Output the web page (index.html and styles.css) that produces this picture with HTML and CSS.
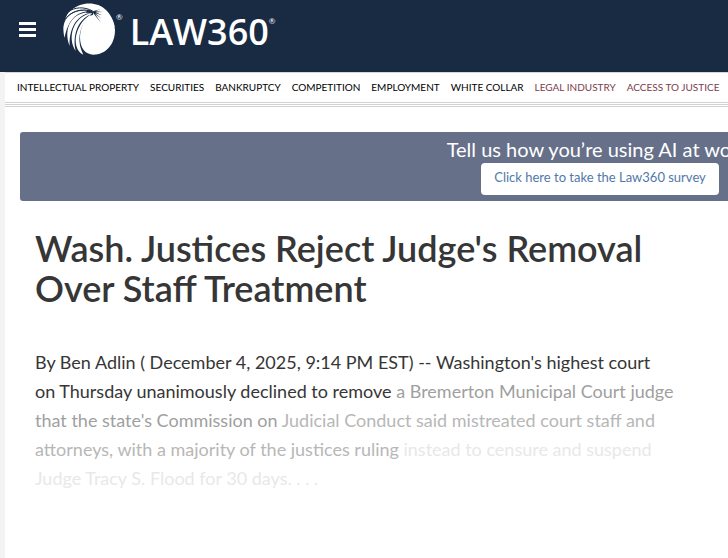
FILE: index.html
```html
<!DOCTYPE html>
<html lang="en">
<head>
<meta charset="utf-8">
<meta name="viewport" content="width=device-width, initial-scale=1">
<title>Wash. Justices Reject Judge's Removal Over Staff Treatment - Law360</title>
<link rel="stylesheet" href="styles.css">
</head>
<body>
<header class="masthead">
  <button class="menu" type="button" aria-label="Menu">
    <svg class="menu-icon" viewBox="0 0 17 15" aria-hidden="true"><path d="M0 0h17v3H0zM0 6h17v3H0zM0 12h17v3H0z"/></svg>
  </button>
  <a class="brand" href="#">
    <svg class="emblem" viewBox="186 6 162 162" aria-hidden="true">
      <path class="emblem-ball" d="M280 33C300 22 345 50 345 90C345 134 317 164 280 164C256 164 240 144 240 112C240 82 256 52 280 38Z"/>
      <path class="emblem-ball" d="M214 31C240 6 290 2 318 30C330 42 341 60 344 80L300 60L278 36C262 28 236 24 214 31Z"/>
      <path class="emblem-ball" d="M274 33C238 25 210 34 194 62C200 42 210 30 224 24C240 20 262 22 274 33Z"/>
      <path class="emblem-ball" d="M276 36C240 28 204 54 194 114C180 66 204 24 276 33Z"/>
      <path class="emblem-ball" d="M276 39C242 38 206 74 209 138C188 84 216 34 276 36Z"/>
      <path class="emblem-ball" d="M276 42C246 50 214 92 227 153C200 112 220 48 276 39Z"/>
      <path class="emblem-ball" d="M277 43C250 62 222 108 250 164C208 142 228 64 277 41Z"/>
      <path class="emblem-ray" d="M278 33C252 19 224 21 204 36M278 34C245 24 212 32 192 62"/>
      <path class="emblem-knot" d="M262 30L280 35L279 44L270 48L276 39L258 38ZM279 34L302 27L286 34L308 36L287 37L307 46L286 40L305 56L285 42L303 68L281 41Z"/>
    </svg>
    <span class="reg">®</span>
    <span class="wordmark">LAW360</span>
    <span class="reg">®</span>
  </a>
</header>
<div class="page">
  <nav class="sections" aria-label="Sections">
    <a href="#">INTELLECTUAL PROPERTY</a>
    <a href="#">SECURITIES</a>
    <a href="#">BANKRUPTCY</a>
    <a href="#">COMPETITION</a>
    <a href="#">EMPLOYMENT</a>
    <a href="#">WHITE COLLAR</a>
    <a class="accent" href="#">LEGAL INDUSTRY</a>
    <a class="accent" href="#">ACCESS TO JUSTICE</a>
  </nav>
  <main>
    <section class="survey">
      <p class="survey-text">Tell us how you’re using AI at work.</p>
      <a class="survey-link" href="#">Click here to take the Law360 survey</a>
    </section>
    <article class="story">
      <h1>Wash. Justices Reject Judge's Removal Over Staff Treatment</h1>
      <p>By Ben Adlin ( December 4, 2025, 9:14 PM EST) -- Washington's highest court on Thursday unanimously declined to remove <span class="fade-1">a Bremerton Municipal Court judge that the state's Commission on</span> <span class="fade-2">Judicial Conduct said mistreated court staff and attorneys, with a majority of the justices ruling</span> <span class="fade-3">instead to censure and suspend Judge Tracy S. Flood for 30 days. . . .</span></p>
    </article>
  </main>
</div>
</body>
</html>
```
FILE: styles.css
```css
* {
  box-sizing: border-box;
}

body {
  margin: 0;
  min-height: 100vh;
  display: flex;
  flex-direction: column;
  overflow-x: hidden;
  background: #f3f3f3;
  color: #363636;
  font-family: Lato, "Liberation Sans", sans-serif;
}

a {
  color: inherit;
  text-decoration: none;
}

.masthead {
  display: flex;
  align-items: flex-start;
  height: 72px;
  padding-left: 19px;
  background: #182b43;
  color: #fff;
}

.menu {
  display: flex;
  margin: 22px 0 0;
  padding: 0;
  border: 0;
  background: none;
}

.menu-icon {
  width: 17px;
  height: 15px;
  fill: #fff;
}

.brand {
  display: flex;
  align-items: flex-start;
  margin: 2px 0 0 26px;
}

.emblem {
  width: 54px;
  height: 54px;
}

.emblem-ball {
  fill: #fff;
}

.emblem-knot {
  fill: #182b43;
}

.emblem-ray {
  fill: none;
  stroke: #182b43;
  stroke-width: 3;
}

.reg {
  margin-top: 10px;
  font-size: 8px;
  line-height: 10px;
}

.wordmark {
  margin-left: 7px;
  padding-top: 8px;
  font-family: "Open Sans", Lato, sans-serif;
  font-size: 36px;
  font-weight: 600;
  line-height: 44px;
}

.wordmark + .reg {
  margin-top: 14px;
}

.page {
  flex: 1;
  margin-left: 5px;
  background: #fff;
}

.sections {
  display: flex;
  gap: 11px;
  height: 35px;
  padding-left: 12px;
  border-top: 1px solid #d5d9d9;
  border-bottom: 1px solid #d0d3d0;
  box-shadow: inset 0 -1px #fff, inset 0 -2px #d0d3d0, inset 0 -3px #fff, inset 0 -4px #d0d3d0;
  color: #000;
  font-size: 10px;
  line-height: 29px;
  white-space: nowrap;
}

.accent {
  color: #7d3c4e;
}

.survey {
  display: flex;
  flex-direction: column;
  align-items: center;
  width: 1160px;
  margin: 25px 0 0 15px;
  padding: 3px 0 6px;
  border-radius: 3px;
  background: #667089;
}

.survey-text {
  margin: 0;
  color: #fff;
  font-size: 20px;
  line-height: 28px;
}

.survey-link {
  padding: 4px 13px 8px;
  border-radius: 4px;
  background: #fff;
  color: #5078aa;
  font-size: 13px;
  line-height: 20px;
}

.story {
  max-width: 669px;
  padding: 27px 0 60px 30px;
}

h1 {
  margin: 0 0 40px;
  font-size: 36px;
  font-weight: 600;
  line-height: 40px;
}

.story p {
  margin: 0;
  font-size: 18px;
  line-height: 29px;
}

.story .fade-1 {
  color: #9f9f9f;
}

.story .fade-2 {
  color: #b7b7b7;
}

.story .fade-3 {
  color: #e8e8e8;
}
```
